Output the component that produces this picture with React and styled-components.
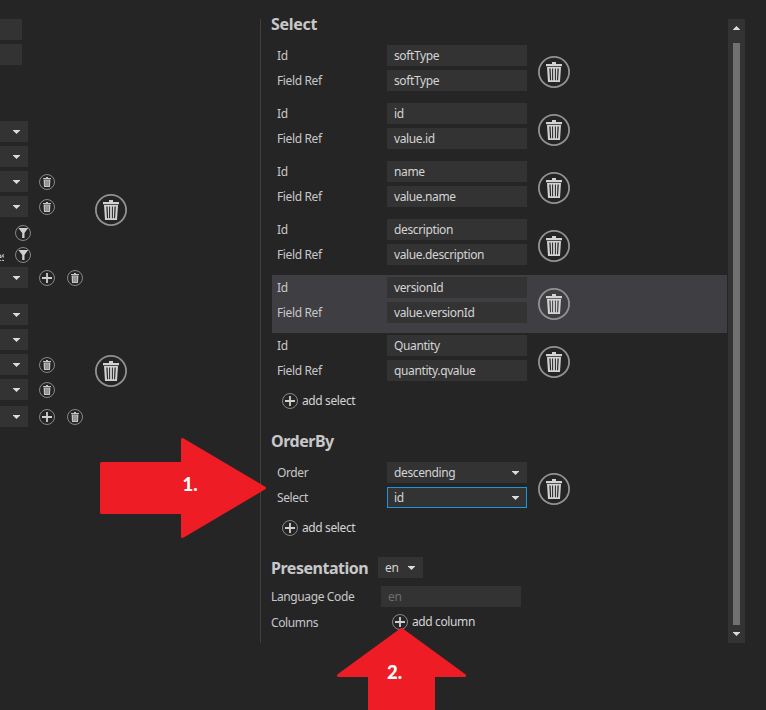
import React from 'react';
import styled, { createGlobalStyle, css } from 'styled-components';

const GlobalStyle = createGlobalStyle`
    * {
        box-sizing: border-box;
    }
    body {
        margin: 0;
        background: #252526;
        color: #c8c8c8;
        font-family: "Noto Sans", "Open Sans", sans-serif;
        font-size: 12px;
        line-height: 21px;
        letter-spacing: -0.38px;
        overflow: hidden;
    }
`

const Page = styled.main`
    position: relative;
    display: flex;
    width: 766px;
    height: 710px;
    padding-top: 19px;
    overflow: hidden;
`

const Sidebar = styled.aside`
    flex: 0 0 260px;
`

const Inputs = styled.div`
    display: flex;
    flex-direction: column;
    gap: 4px;
    margin-bottom: 56px;
`

const Group = styled.section`
    display: flex;
    align-items: center;
    height: ${props => props.$height}px;
    margin-bottom: 5px;
`

const GroupRows = styled.div`
    align-self: stretch;
    width: 95px;
`

const GroupRow = styled.div`
    display: flex;
    align-items: center;
    gap: 12px;
    height: 21px;
    margin-bottom: ${props => props.$last ? 6 : 4}px;

    & > :first-child {
        margin-right: -1px;
    }
`

const Filters = styled.div`
    padding: 1px 0;
`

const FilterRow = styled.div`
    display: flex;
    align-items: center;
    gap: 11px;
    height: 22px;
`

const FilterName = styled.span`
    display: flex;
    justify-content: flex-end;
    width: 4px;
    padding-top: 2px;
    overflow: hidden;

    span {
        margin-right: -3px;
    }
`

const fieldBox = css`
    width: ${props => props.$width || 140}px;
    height: 21px;
    flex: none;
    background: #333334;
    white-space: nowrap;
`

const Input = styled.div`
    ${fieldBox}
    padding-left: ${props => props.$width ? 0 : 7}px;
    color: ${props => props.$disabled ? '#6d6d6d' : '#d4d4d4'};
`

const SelectBox = styled.div`
    ${fieldBox}
    display: flex;
    align-items: center;
    justify-content: space-between;
    padding: 0 8px 0 7px;
    color: #d4d4d4;
    box-shadow: ${props => props.$focused ? 'inset 0 0 0 1px #1c97d8' : 'none'};
`

const Panel = styled.section`
    flex: 0 0 467px;
    height: 624px;
    border-left: 1px solid #3f3f42;
`

const Title = styled.h2`
    margin: 0;
    padding-left: 10px;
    font-size: 16px;
    font-weight: 700;
    line-height: 24px;
    letter-spacing: ${props => props.$spacing || -0.48}px;
    color: #c8c8c8;
`

const SectionTitle = styled(Title)`
    height: ${props => props.$height}px;
    padding-top: ${props => props.$top || 0}px;
    line-height: ${props => props.$line || 11}px;
`

const Item = styled.div`
    display: flex;
    align-items: center;
    gap: 11px;
    height: 58px;
    margin-left: 11px;
    padding-left: 5px;
    background: ${props => props.$active ? '#3f3e43' : 'transparent'};
`

const ItemFields = styled.div`
    display: flex;
    flex-direction: column;
    align-self: stretch;
    gap: 4px;
    padding-top: 2px;
`

const Field = styled.div`
    display: flex;
`

const Label = styled.label`
    width: ${props => props.$width || 110}px;
    white-space: nowrap;
`

const AddButton = styled.button`
    display: flex;
    align-items: center;
    gap: 4px;
    height: 20px;
    margin: 0;
    padding: 0;
    margin-left: ${props => props.$indent || 0}px;
    border: 0;
    background: none;
    color: #d4d4d4;
    font: inherit;
    letter-spacing: inherit;
    white-space: nowrap;

    span {
        padding-bottom: 1px;
    }
`

const Presentation = styled.div`
    display: flex;
    align-items: center;
    height: 21px;
    margin-top: 19px;
`

const PresentationTitle = styled(Title)`
    width: 117px;
`

const PresentationField = styled.div`
    display: flex;
    height: 21px;
    margin-top: ${props => props.$top}px;
    padding-left: 10px;
`

const Scrollbar = styled.div`
    display: flex;
    flex-direction: column;
    align-items: center;
    justify-content: space-between;
    width: 17px;
    height: 624px;
    margin-left: 1px;
    padding: 7px 0;
    background: #333334;
`

const Thumb = styled.div`
    width: 7px;
    height: 582px;
    margin-top: 6px;
    background: #717171;
`

const Svg = styled.svg`
    display: block;
    flex: none;
`

// callouts lie over the form
const Callout = styled.svg`
    position: absolute;
    left: ${props => props.$x}px;
    top: ${props => props.$y}px;
    fill: #ee1c24;
    stroke: #ee1c24;
    stroke-width: 3;
    stroke-linejoin: round;
`

const CalloutText = styled.span`
    position: absolute;
    left: ${props => props.$x}px;
    top: ${props => props.$y}px;
    color: #ffffff;
    font-family: Lato, "Noto Sans", sans-serif;
    font-size: 18.5px;
    font-weight: 900;
    line-height: 22px;
    letter-spacing: 0;
`

const Caret = ({ up }) => (
    <Svg width='7' height='4' viewBox='0 0 7 4'>
        <path d={up ? 'M0 4V3.4L3.5 0L7 3.4V4Z' : 'M0 0H7V.6L3.5 4L0 .6Z'} fill='#dcdcdc' />
    </Svg>
)

const Trash = () => (
    <Svg width='32' height='32' viewBox='0 0 32 32'>
        <circle cx='16' cy='16' r='15.1' fill='none' stroke='#929292' strokeWidth='1.8' />
        <path d='M14 6h4v2.2h-4zM8 8h16v2.2H8z' fill='#d2d2d2' />
        <path
            fillRule='evenodd'
            fill='#d2d2d2'
            d='M9 11h14l-1 15H10zM11.3 12.6l.7 11.6h1.1L12.6 12.6zM14.1 12.6v11.6h1V12.6zM16.9 12.6v11.6h1V12.6zM19.5 12.6l-.5 11.6h1.1l.7-11.6z'
        />
    </Svg>
)

// too small for separate slats, the bin gets a grey core
const SmallTrash = () => (
    <Svg width='16' height='16' viewBox='0 0 16 16'>
        <circle cx='8' cy='8' r='7.5' fill='none' stroke='#929292' strokeWidth='0.9' />
        <path d='M7 3h2v1H7zM4 4h8v1H4z' fill='#c4c4c4' />
        <path d='M4.6 5.5h6.8L11 13H5z' fill='#c4c4c4' />
        <path d='M6 6.4h4V12H6z' fill='#8e8e8e' />
        <path d='M7.6 6.4h.8V12h-.8z' fill='#a8a8a8' />
    </Svg>
)

const Plus = () => (
    <Svg width='16' height='16' viewBox='0 0 16 16'>
        <circle cx='8' cy='8' r='7.5' fill='none' stroke='#929292' strokeWidth='0.9' />
        <path d='M7.1 3h1.8v4.1H13v1.8H8.9V13H7.1V8.9H3V7.1h4.1z' fill='#d0d0d0' />
    </Svg>
)

const Funnel = () => (
    <Svg width='16' height='16' viewBox='0 0 16 16'>
        <circle cx='8' cy='8' r='7.5' fill='none' stroke='#929292' strokeWidth='0.9' />
        <path d='M3.4 3H13.2L9.5 8V13H7.2V8z' fill='#d0d0d0' />
    </Svg>
)

const Dropdown = ({ children, width, focused }) => (
    <SelectBox $width={width} $focused={focused}>
        <span>{children}</span>
        <Caret />
    </SelectBox>
)

const SideRow = ({ add, remove, last }) => (
    <GroupRow $last={last}>
        <Dropdown width={28} />
        {add && <Plus />}
        {remove && <SmallTrash />}
    </GroupRow>
)

const selects = [
    { id: 'softType', field: 'softType' },
    { id: 'id', field: 'value.id' },
    { id: 'name', field: 'value.name' },
    { id: 'description', field: 'value.description' },
    { id: 'versionId', field: 'value.versionId', active: true },
    { id: 'Quantity', field: 'quantity.qvalue' },
];

export default () => {
    return (
        <>
            <GlobalStyle />
            <Page>
                <Sidebar>
                    <Inputs>
                        <Input $width={22} />
                        <Input $width={22} />
                    </Inputs>
                    <Group $height={178}>
                        <GroupRows>
                            <SideRow />
                            <SideRow />
                            <SideRow remove />
                            <SideRow remove />
                            <Filters>
                                <FilterRow><FilterName /><Funnel /></FilterRow>
                                <FilterRow><FilterName><span>es</span></FilterName><Funnel /></FilterRow>
                            </Filters>
                            <SideRow add remove />
                        </GroupRows>
                        <Trash />
                    </Group>
                    <Group $height={134}>
                        <GroupRows>
                            <SideRow />
                            <SideRow />
                            <SideRow remove />
                            <SideRow remove last />
                            <SideRow add remove />
                        </GroupRows>
                        <Trash />
                    </Group>
                </Sidebar>
                <Panel>
                    <SectionTitle $height={24} $spacing={-0.3}>Select</SectionTitle>
                    {selects.map(item => (
                        <Item key={item.id} $active={item.active}>
                            <ItemFields>
                                <Field><Label>Id</Label><Input>{item.id}</Input></Field>
                                <Field><Label>Field Ref</Label><Input>{item.field}</Input></Field>
                            </ItemFields>
                            <Trash />
                        </Item>
                    ))}
                    <AddButton $indent={21}><Plus /><span>add select</span></AddButton>
                    <SectionTitle $height={49} $top={18} $line={24}>OrderBy</SectionTitle>
                    <Item>
                        <ItemFields>
                            <Field><Label>Order</Label><Dropdown>descending</Dropdown></Field>
                            <Field><Label>Select</Label><Dropdown focused>id</Dropdown></Field>
                        </ItemFields>
                        <Trash />
                    </Item>
                    <AddButton $indent={21}><Plus /><span>add select</span></AddButton>
                    <Presentation>
                        <PresentationTitle>Presentation</PresentationTitle>
                        <Dropdown width={45}>en</Dropdown>
                    </Presentation>
                    <PresentationField $top={8}>
                        <Label>Language Code</Label>
                        <Input $disabled>en</Input>
                    </PresentationField>
                    <PresentationField $top={5}>
                        <Label $width={121}>Columns</Label>
                        <AddButton><Plus /><span>add column</span></AddButton>
                    </PresentationField>
                </Panel>
                <Scrollbar>
                    <Caret up />
                    <Thumb />
                    <Caret />
                </Scrollbar>
                <Callout $x={100} $y={438} width='167' height='100'>
                    <path d='M1.5 25.5H82.5V1.5L164.5 50L82.5 98.5V74.5H1.5Z' />
                </Callout>
                <CalloutText $x={182.5} $y={473}>1.</CalloutText>
                <Callout $x={337} $y={628} width='130' height='82'>
                    <path d='M64.5 1.5L127.5 47.5H96.5V90H32.5V47.5H1.5Z' />
                </Callout>
                <CalloutText $x={387} $y={661}>2.</CalloutText>
            </Page>
        </>
    );
}
